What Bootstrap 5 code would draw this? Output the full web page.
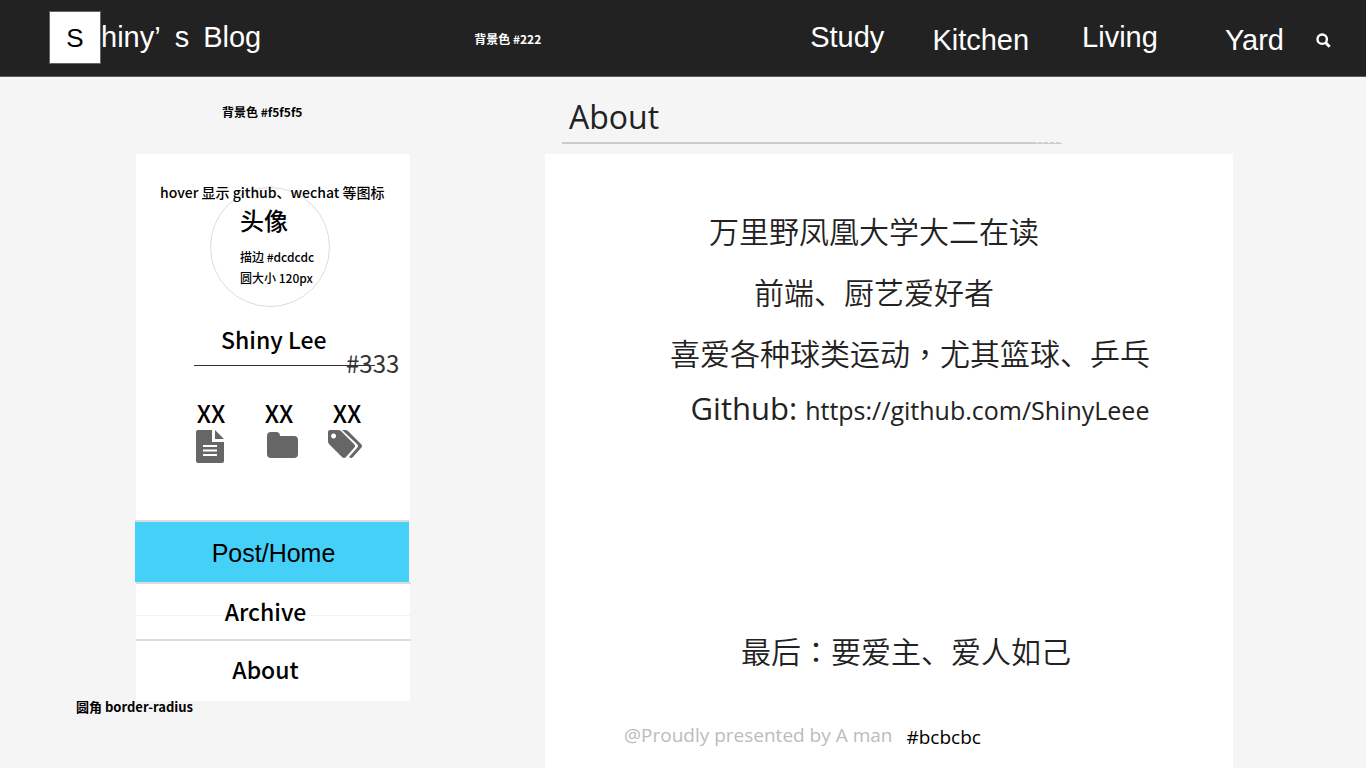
<!DOCTYPE html>
<html lang="zh-CN">
<head>
<meta charset="utf-8">
<meta name="viewport" content="width=device-width, initial-scale=1">
<title>Shiny's Blog</title>
<link href="https://cdn.jsdelivr.net/npm/bootstrap@5.3.0/dist/css/bootstrap.min.css" rel="stylesheet">
<style>
  body { background: #f5f5f5; color: #000; font-family: "Noto Sans CJK SC", sans-serif; }
  a { color: inherit; text-decoration: none; }
  .note { font-size: 12px; line-height: 20px; font-weight: 700; white-space: nowrap; }
  .note-md { font-size: 14px; line-height: 20px; font-weight: 500; white-space: nowrap; }

  /* top bar */
  .topbar { background: #222; color: #fff; height: 77px; border-bottom: 1px solid #5e5959; padding: 0 35px 0 49px; font-family: "Liberation Sans", sans-serif; font-size: 29px; line-height: 32px; }
  .topbar .note { font-family: "Noto Sans CJK SC", sans-serif; margin-left: 213px; padding-top: 29px; }
  .logo-box { width: 52px; height: 53px; margin-top: 11px; background: #fff; color: #000; border: 1px solid #666; font-size: 26px; }
  .brand-text { gap: 14px; padding-top: 21px; }
  .menu { padding-top: 21px; }
  .menu li { margin-left: 48px; }
  .menu .low { padding-top: 3px; }
  .menu .wide { margin-left: 53px; }
  .menu .wider { margin-left: 67px; }
  .search-btn { margin: 33px 0 0 32px; width: 15px; height: 15px; }

  /* page columns */
  .page { display: grid; grid-template-columns: 274px minmax(0, 1fr); column-gap: 135px; padding: 0 133px 0 136px; }
  .col-head { height: 77px; }
  .side-head { padding: 25px 0 0 86px; }
  .profile { height: 366px; padding-top: 33px; }
  .hover-note { top: 28px; left: 24px; }
  .avatar { width: 120px; height: 120px; margin-left: 74px; padding: 16px 0 0 29px; border: 1px solid #dcdcdc; }
  .avatar-title { font-size: 24px; line-height: 32px; font-weight: 500; margin-bottom: 10px; }
  .avatar .note { line-height: 21px; font-weight: 500; }
  .name { font-size: 23px; line-height: 32px; font-weight: 500; margin: 16px 0 10px 85px; }
  .name-rule { width: 181px; margin-left: 58px; border-top: 1px solid #333; }
  .rule-note { top: 193px; left: 210px; font-size: 24px; line-height: 32px; color: #333; }
  .stats { padding: 31px 0 0 57px; }
  .stats dt, .stats dd { margin: 0; font-weight: 500; }
  .stat { width: 36px; margin-right: 32px; font-size: 24px; line-height: 32px; }
  .stat svg { display: block; overflow: visible; }
  .side-menu { font-size: 23px; line-height: 30px; font-weight: 500; }
  .side-menu a { display: block; text-align: center; border-top: 2px solid #dcdcdc; }
  .side-menu .current { height: 62px; margin: 0 1px 0 -1px; padding: 16px 0 0 3px; background: #45d0f8; font-family: "Liberation Sans", sans-serif; font-size: 25px; font-weight: 400; }
  .side-menu .archive { height: 57px; margin-right: -1px; padding: 12px 16px 0 0; background: linear-gradient(#f3f3f3, #f3f3f3) 0 31px / 100% 1px no-repeat, linear-gradient(#fff, #fff) 0 0 / calc(100% - 1px) 100% no-repeat; }
  .side-menu .about { height: 62px; margin-right: -1px; padding: 13px 16px 0 0; background: linear-gradient(#fff, #fff) 0 0 / calc(100% - 1px) 100% no-repeat; }
  .radius-note { left: -60px; bottom: -16px; font-weight: 700; font-size: 13px; }

  /* article */
  .article, .article-head { font-family: "Open Sans", "Noto Sans CJK SC", sans-serif; color: #222; }
  .article-head { padding: 24px 0 0 17px; }
  .article-head h1 { font-size: 32px; line-height: 32px; margin: 0 0 9px; padding-left: 7px; font-weight: 400; }
  .head-rule { max-width: 500px; height: 2px; background: repeating-linear-gradient(90deg, #f5f5f5 0 2px, #ccc 2px 6px) 100% 0 / 26px 1px no-repeat #ccc; }
  .article { min-height: 614px; background: #fff; font-size: 30px; line-height: 40px; text-align: center; padding-top: 56px; }
  .article p { margin: 0 0 21px; font-family: "Noto Sans CJK SC DemiLight", "Noto Sans CJK SC", sans-serif; font-weight: 350; }
  .mid-mark { font-family: "Noto Sans CJK TC", sans-serif; }
  .shift-l { padding-right: 30px; }
  .shift-r { padding-left: 42px; }
  .article .shift-end { padding-left: 34px; }
  .article .github { font-family: "Open Sans", sans-serif; font-size: 31px; font-weight: 400; padding-left: 62px; margin: -5px 0 200px; }
  .github a { font-size: 25px; }
  .foot { padding: 32px 0 0 79px; gap: 14px; font-size: 19px; line-height: 24px; text-align: left; }
  .foot-credit { color: #bcbcbc; }
  .foot-code { padding-top: 2px; color: #000; }
</style>
</head>
<body>
<header class="topbar d-flex align-items-start">
  <a href="#" class="d-flex">
    <span class="logo-box d-flex align-items-center justify-content-center">S</span>
    <span class="brand-text d-flex"><span>hiny’</span> <span>s</span> <span>Blog</span></span>
  </a>
  <span class="note">背景色 #222</span>
  <nav class="ms-auto">
    <ul class="menu d-flex list-unstyled mb-0">
      <li><a href="#">Study</a></li>
      <li class="low"><a href="#">Kitchen</a></li>
      <li class="wide"><a href="#">Living</a></li>
      <li class="wider low"><a href="#">Yard</a></li>
    </ul>
  </nav>
  <button type="button" class="search-btn d-flex p-0 border-0 bg-transparent" aria-label="Search">
    <svg width="15" height="15" viewBox="0 0 15 15" fill="none" stroke="#fff"><circle cx="6.200" cy="6.200" r="4.700" stroke-width="2.400"/><path d="M9.700 9.700l4 4" stroke-width="2.800"/></svg>
  </button>
</header>

<div class="page">
  <aside>
    <div class="col-head side-head note">背景色 #f5f5f5</div>
    <div class="position-relative">
      <section class="profile bg-white">
        <span class="note-md hover-note position-absolute">hover 显示 github、wechat 等图标</span>
        <div class="avatar rounded-circle">
          <div class="avatar-title">头像</div>
          <div class="note">描边 #dcdcdc</div>
          <div class="note">圆大小 120px</div>
        </div>
        <div class="name">Shiny Lee</div>
        <div class="name-rule"></div>
        <span class="rule-note position-absolute">#333</span>
        <dl class="stats d-flex mb-0">
          <div class="stat text-center">
            <dt>XX</dt>
            <dd><svg width="36" height="34" viewBox="0 0 36 34"><path fill="#666" d="M5 1h14v12h12v19q0 2-2 2H5q-2 0-2-2V3q0-2 2-2z"/><path fill="#666" d="M22 1l9 9h-9z"/><path stroke="#fff" stroke-width="2" d="M10 17h14M10 21.500h14M10 26h14"/></svg></dd>
          </div>
          <div class="stat text-center">
            <dt>XX</dt>
            <dd><svg width="36" height="34" viewBox="0 0 36 34"><path fill="#666" d="M10 3h5q4 0 4 4h14q4 0 4 4v14q0 4-4 4H10q-4 0-4-4V7q0-4 4-4z"/></svg></dd>
          </div>
          <div class="stat text-center">
            <dt>XX</dt>
            <dd><svg width="36" height="34" viewBox="2 0 36 34"><path fill="#666" fill-rule="evenodd" d="M3 1h8q2 0 3 1l13 13q2 2 0 4l-8 9q-2 2-4 0L2 15q-1-1-1-3V3q0-2 2-2zM6.500 4.500a2.500 2.500 0 1 0 .1 0z"/><path fill="#666" d="M15 1h3q2 0 3 1l13 13q2 2 0 4l-8 9q-2 2-4 0l8-9q2-2 0-4z"/></svg></dd>
          </div>
        </dl>
      </section>
      <nav class="side-menu">
        <a href="#" class="current">Post/Home</a>
        <a href="#" class="archive">Archive</a>
        <a href="#" class="about">About</a>
      </nav>
      <span class="note-md radius-note position-absolute">圆角 border-radius</span>
    </div>
  </aside>

  <main>
    <div class="col-head article-head">
      <h1>About</h1>
      <div class="head-rule"></div>
    </div>
    <article class="article">
      <p class="shift-l">万里野凤凰大学大二在读</p>
      <p class="shift-l">前端、厨艺爱好者</p>
      <p class="shift-r">喜爱各种球类运动<span class="mid-mark" lang="zh-TW">，</span>尤其篮球、乒乓</p>
      <p class="github">Github: <a href="#">https://github.com/ShinyLeee</a></p>
      <p class="shift-end">最后<span class="mid-mark" lang="zh-TW">：</span>要爱主、爱人如己</p>
      <footer class="foot d-flex">
        <span class="foot-credit">@Proudly presented by A man</span>
        <span class="foot-code">#bcbcbc</span>
      </footer>
    </article>
  </main>
</div>
<script src="https://cdn.jsdelivr.net/npm/bootstrap@5.3.0/dist/js/bootstrap.bundle.min.js"></script>
</body>
</html>
